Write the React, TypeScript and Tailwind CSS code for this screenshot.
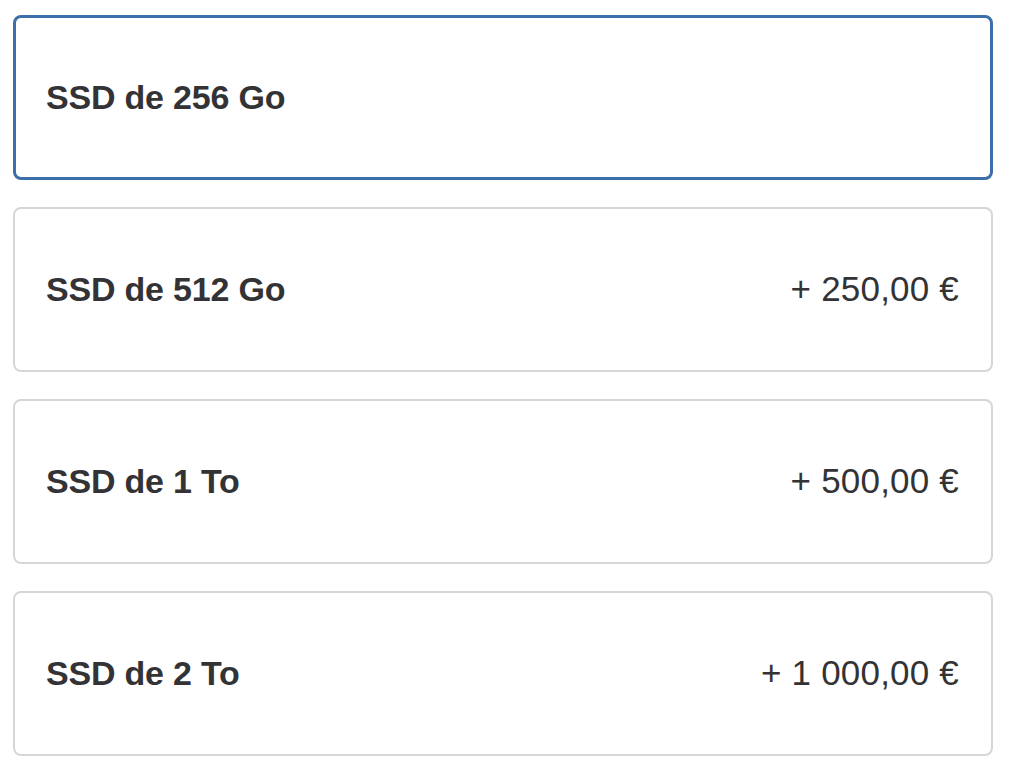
import React from 'react';

const options = [
  { label: 'SSD de 256 Go', price: '', selected: true },
  { label: 'SSD de 512 Go', price: '+ 250,00 €', selected: false },
  { label: 'SSD de 1 To', price: '+ 500,00 €', selected: false },
  { label: 'SSD de 2 To', price: '+ 1 000,00 €', selected: false },
];

export default function App() {
  return (
    <div className="min-h-screen bg-white font-['Liberation_Sans',Arial,sans-serif] text-[#333336]">
      <div className="ml-[13px] pt-[15px] w-[980px] flex flex-col gap-[27px]">
        {options.map((o) => (
          <div
            key={o.label}
            className={
              o.selected
                ? 'h-[165px] rounded-[8px] border-[3px] border-[#3d6fab] flex items-center justify-between pl-[30px] pr-[31px] pb-[2px]'
                : 'h-[165px] rounded-[8px] border-2 border-[#d6d6d6] flex items-center justify-between pl-[31px] pr-[32px] pb-[2px]'
            }
          >
            <span className="text-[34px] font-bold leading-none tracking-[-0.2px]">{o.label}</span>
            {o.price && <span className="text-[35px] leading-none tracking-[0.2px]">{o.price}</span>}
          </div>
        ))}
      </div>
    </div>
  );
}
